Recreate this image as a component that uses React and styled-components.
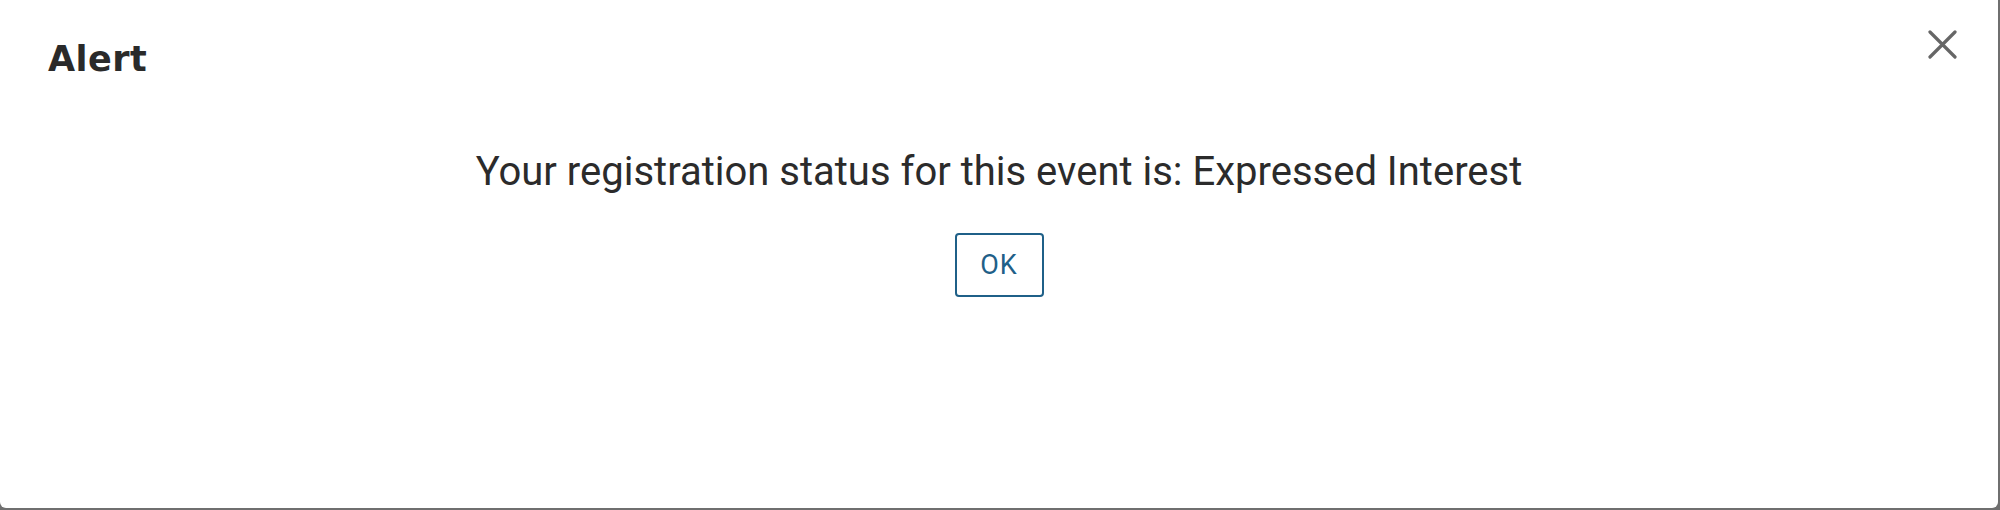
import styled, { createGlobalStyle } from 'styled-components';

const GlobalStyle = createGlobalStyle`
  html, body {
    margin: 0;
    padding: 0;
    background: #6f6f6f;
  }
  body {
    font-family: Roboto, "Liberation Sans", sans-serif;
  }
`;

const Modal = styled.div`
  width: 1998px;
  height: 508px;
  background: #ffffff;
  border-radius: 0 0 6px 6px;
  display: flex;
  flex-direction: column;
`;

const Header = styled.div`
  display: flex;
  justify-content: space-between;
  align-items: flex-start;
  padding: 30px 41px 0 48px;
`;

const Title = styled.h2`
  margin: 11px 0 0;
  font-family: "DejaVu Sans", sans-serif;
  font-weight: 800;
  font-size: 35px;
  line-height: 36px;
  letter-spacing: 0.5px;
  color: #2a2a2a;
`;

const CloseButton = styled.button`
  width: 29px;
  height: 29px;
  padding: 0;
  border: none;
  background: none;
  cursor: pointer;
  display: flex;
`;

const Body = styled.div`
  display: flex;
  flex-direction: column;
  align-items: center;
  padding-top: 71px;
`;

const Message = styled.p`
  margin: 0;
  font-size: 40px;
  line-height: 48px;
  color: #2b2b2b;
`;

const OkButton = styled.button`
  margin-top: 37px;
  width: 89px;
  height: 64px;
  border: 2px solid #1f6088;
  border-radius: 4px;
  background: #ffffff;
  color: #1f6088;
  font-family: Roboto, sans-serif;
  font-size: 27px;
  letter-spacing: 1px;
  cursor: pointer;
`;

const CloseIcon = () => (
  <svg width="29" height="29" viewBox="0 0 29 29">
    <path d="M2 2L27 27M27 2L2 27" stroke="#666" strokeWidth="3.2" strokeLinecap="round" />
  </svg>
);

export default function App() {
  return (
    <>
      <GlobalStyle />
      <Modal>
        <Header>
          <Title>Alert</Title>
          <CloseButton aria-label="Close">
            <CloseIcon />
          </CloseButton>
        </Header>
        <Body>
          <Message>Your registration status for this event is: Expressed Interest</Message>
          <OkButton>OK</OkButton>
        </Body>
      </Modal>
    </>
  );
}
